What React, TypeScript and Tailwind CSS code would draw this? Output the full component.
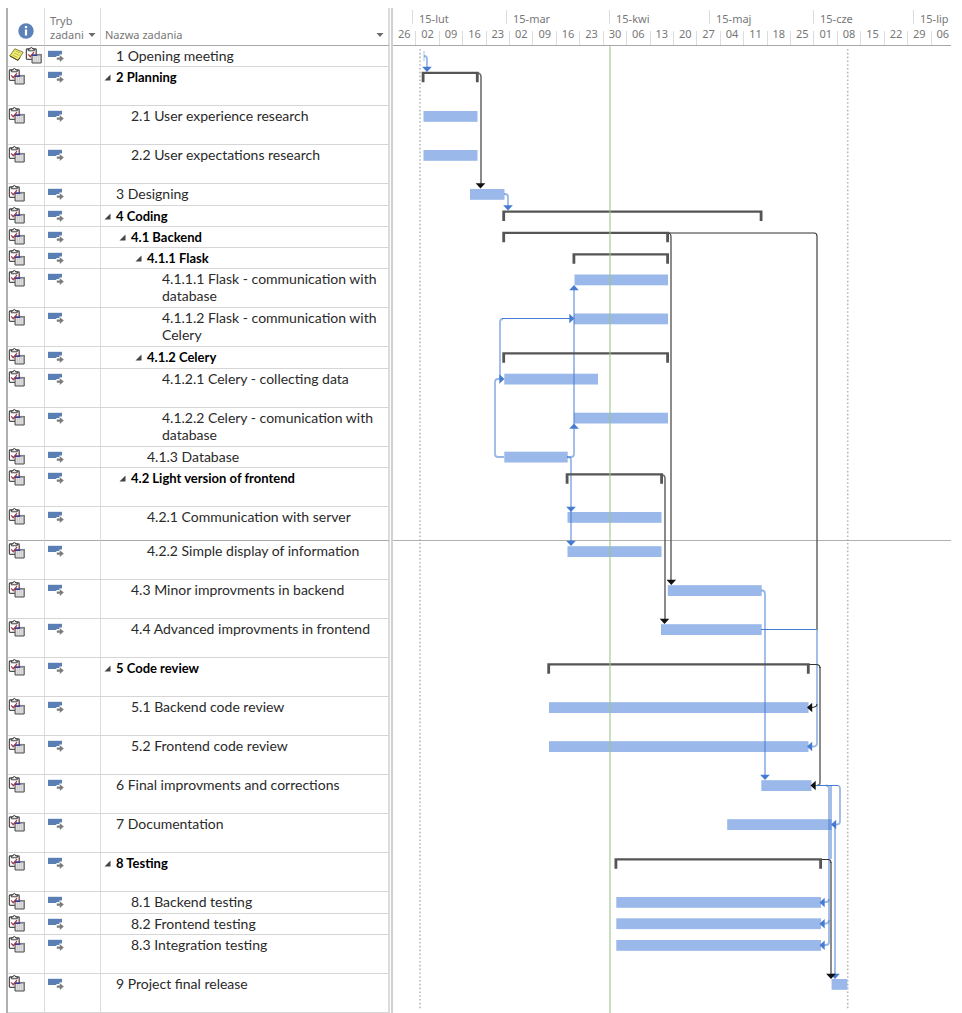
import React from "react";

type Task = {
  id: string;
  name: string;
  level: 1 | 2 | 3 | 4;
  size: "xs" | "sm" | "md" | "lg";
  summary?: boolean;
  note?: boolean;
  pageBreak?: boolean;
};

const tasks: Task[] = [
  { id: "1", name: "Opening meeting", level: 1, size: "xs", note: true },
  { id: "2", name: "Planning", level: 1, size: "lg", summary: true },
  { id: "2.1", name: "User experience research", level: 2, size: "lg" },
  { id: "2.2", name: "User expectations research", level: 2, size: "lg" },
  { id: "3", name: "Designing", level: 1, size: "sm" },
  { id: "4", name: "Coding", level: 1, size: "xs", summary: true },
  { id: "4.1", name: "Backend", level: 2, size: "xs", summary: true },
  { id: "4.1.1", name: "Flask", level: 3, size: "xs", summary: true },
  { id: "4.1.1.1", name: "Flask - communication with database", level: 4, size: "lg" },
  { id: "4.1.1.2", name: "Flask - communication with Celery", level: 4, size: "lg" },
  { id: "4.1.2", name: "Celery", level: 3, size: "sm", summary: true },
  { id: "4.1.2.1", name: "Celery - collecting data", level: 4, size: "lg" },
  { id: "4.1.2.2", name: "Celery - comunication with database", level: 4, size: "lg" },
  { id: "4.1.3", name: "Database", level: 3, size: "xs" },
  { id: "4.2", name: "Light version of frontend", level: 2, size: "lg", summary: true },
  { id: "4.2.1", name: "Communication with server", level: 3, size: "md", pageBreak: true },
  { id: "4.2.2", name: "Simple display of information", level: 3, size: "lg" },
  { id: "4.3", name: "Minor improvments in backend", level: 2, size: "lg" },
  { id: "4.4", name: "Advanced improvments in frontend", level: 2, size: "lg" },
  { id: "5", name: "Code review", level: 1, size: "lg", summary: true },
  { id: "5.1", name: "Backend code review", level: 2, size: "lg" },
  { id: "5.2", name: "Frontend code review", level: 2, size: "lg" },
  { id: "6", name: "Final improvments and corrections", level: 1, size: "lg" },
  { id: "7", name: "Documentation", level: 1, size: "lg" },
  { id: "8", name: "Testing", level: 1, size: "lg", summary: true },
  { id: "8.1", name: "Backend testing", level: 2, size: "sm" },
  { id: "8.2", name: "Frontend testing", level: 2, size: "xs" },
  { id: "8.3", name: "Integration testing", level: 2, size: "lg" },
  { id: "9", name: "Project final release", level: 1, size: "lg" },
];

const rowHeight = { xs: "h-[21px]", sm: "h-[22px]", md: "h-[34px]", lg: "h-[39px]" };
const indent = { 1: "pl-[3px]", 2: "pl-[18px]", 3: "pl-[34px]", 4: "pl-[49px]" };

const months = [
  { label: "15-lut", width: "w-[94px]" },
  { label: "15-mar", width: "w-[103px]" },
  { label: "15-kwi", width: "w-[100px]" },
  { label: "15-maj", width: "w-[104px]" },
  { label: "15-cze", width: "w-[100px]" },
  { label: "15-lip", width: "w-[41px]" },
];

const weeks = [
  "26", "02", "09", "16", "23", "02", "09", "16", "23", "30", "06", "13",
  "20", "27", "04", "11", "18", "25", "01", "08", "15", "22", "29", "06",
];

// [x start, x end, y top] of every task bar
const bars: [number, number, number][] = [
  [423.5, 477.5, 111], [423.5, 477.5, 150], [470, 504.5, 189],
  [574.5, 668, 274.5], [574, 668, 313.5], [504.3, 598, 373.7], [574, 668, 412.7],
  [504.3, 567.7, 451.7], [567.5, 661.5, 512], [567.5, 661.5, 546.2],
  [667.8, 761.7, 585.2], [661, 761.7, 624.2], [549, 808.5, 702.2],
  [549, 808.5, 741.2], [761.3, 811.5, 780.2], [727.2, 831.6, 819.2],
  [616.3, 821, 897], [616.3, 821, 918.3], [616.3, 821, 940], [831.6, 847.3, 979],
];

// [x start, x end, y top] of every summary bracket
const brackets: [number, number, number][] = [
  [421.7, 478.7, 71.7], [502.3, 762.5, 210.5], [502.3, 669, 231.7],
  [572.5, 669, 253.3], [502.3, 669, 352.3], [565.7, 663, 473.3],
  [547.3, 809.7, 663.3], [614.5, 822, 858.3],
];

const blueLinks = [
  "M424 56 Q427 56 427 59 V69",
  "M504 194 H505 Q508 194 508 197 V207",
  "M500 379 V322 Q500 319 503 319",
  "M504 457 H498 Q495 457 495 454 V382 Q495 379 498 379 H500",
  "M567 457 H568 Q571 457 571 460 V543",
  "M567 457 H571 Q574 457 574 454 V289",
  "M761 590.5 H762 Q765 590.5 765 594 V777",
  "M817 630 V743 Q817 746.5 814 746.5 H811",
  "M838 785.5 Q840 786 840 789 V821 Q840 824.5 837 824.5 H834",
  "M831 786 V859",
  "M826 785.5 Q829 785.5 829 788 V942 Q829 945 826 945 H823",
  "M829 899 Q829 902 826 902 H823",
  "M829 920 Q829 923.5 826 923.5 H823",
  "M832 824.5 Q835 824.5 835 828 V976",
];

const thinBlue = ["M502 318.5 H571", "M761 629.5 H816", "M813 785.5 H838"];

const blackLinks = [
  "M477 73 Q481 73 481 77 V185",
  "M671 237 V582",
  "M817 630 V236",
  "M661 474.5 Q665 475 665 478 V621",
  "M820 667 V782 Q820 785.5 817 785.5",
  "M831 862 V975",
];

const thinBlack = [
  "M668 233 H814 Q817 233 817 236",
  "M809 664.5 H816 Q820 664.5 820 668",
  "M817 704 Q817 707.5 811 707.5",
  "M821 859.5 H828 Q831 859.5 831 863",
  "M668 233 Q671 233 671 237",
];

type Dir = "down" | "up" | "left" | "right";
const heads: [number, number, Dir, string][] = [
  [427, 72, "down", "#467bd2"], [480.5, 188.5, "down", "#111"], [508, 210.5, "down", "#467bd2"],
  [574, 285, "up", "#467bd2"], [574.5, 318.5, "right", "#467bd2"], [504.5, 379, "right", "#467bd2"],
  [574, 423.5, "up", "#467bd2"], [571, 512, "down", "#467bd2"], [571, 546, "down", "#467bd2"],
  [671.3, 585, "down", "#111"], [664.5, 624, "down", "#111"], [807, 707.5, "left", "#111"],
  [807, 746.5, "left", "#467bd2"], [765, 780, "down", "#467bd2"], [810.5, 785.5, "left", "#111"],
  [831, 824.5, "left", "#467bd2"], [819.5, 902.5, "left", "#467bd2"], [819.5, 923.7, "left", "#467bd2"],
  [819.5, 945.3, "left", "#467bd2"], [835, 979, "down", "#467bd2"], [831, 979, "down", "#111"],
];

function headPath(x: number, y: number, dir: Dir) {
  if (dir === "down") return `M${x} ${y} l-4.8 -5.2 h9.6 z`;
  if (dir === "up") return `M${x} ${y} l-4.8 5.2 h9.6 z`;
  if (dir === "left") return `M${x} ${y} l5.2 -4.8 v9.6 z`;
  return `M${x} ${y} l-5.2 -4.8 v9.6 z`;
}

function InfoIcon() {
  return (
    <svg width="16" height="16" viewBox="0 0 16 16" role="img" aria-label="Indicators">
      <circle cx="8" cy="8" r="7.7" fill="#5b81b8" />
      <rect x="6.9" y="3" width="2.2" height="2.2" fill="#fff" />
      <path d="M6.9 6.6h2.2v6h-2.2z" fill="#fff" />
    </svg>
  );
}

function NoteIcon() {
  return (
    <svg width="17" height="17" viewBox="0 0 17 17" className="shrink-0">
      <path d="M6.8 2.8 15.2 6.2 10 14.2 1.8 9.8z" fill="#f3ee74" stroke="#77732f" strokeWidth="0.9" />
      <path d="M1.8 10 10 14.5 12 11.6" fill="none" stroke="#4a4720" strokeWidth="1" />
      <path d="M7.4 5l5.4 2.3M6 7l5.4 2.5M4.6 9l5 2.6" stroke="#b8b04a" strokeWidth="0.9" />
    </svg>
  );
}

function ClipboardIcon() {
  return (
    <svg width="17" height="18" viewBox="0 0 17 18" className="shrink-0">
      <rect x="1.4" y="3" width="9.8" height="10.4" rx="0.8" fill="#fff" stroke="#505050" strokeWidth="1.3" />
      <path d="M3.4 4.8V3h1.5Q5.1 1.4 6.3 1.4T7.8 3h1.5v1.8z" fill="#e6e6e6" stroke="#333" strokeWidth="0.9" />
      <path d="M3.2 8.4l2 2.3 3.8-4.6" fill="none" stroke="#b0353b" strokeWidth="1.3" />
      <rect x="7" y="8.4" width="9.4" height="8.4" fill="#c9c9c9" />
      <path d="M8 11h7.6M8 13h7.6M8 15h7.6" stroke="#f2f2f2" strokeWidth="1" strokeDasharray="1.3 0.7" />
      <path d="M7 9.5V17H16.2V8" fill="none" stroke="#4c4c4c" strokeWidth="1" />
      <path d="M11.5 8.7h5" stroke="#808080" strokeWidth="1.6" />
      <path d="M6.8 9.1h5.4" stroke="#26268c" strokeWidth="1.5" />
    </svg>
  );
}

function AutoScheduleIcon() {
  return (
    <svg width="16" height="17" viewBox="0 0 16 17" className="block">
      <rect x="0" y="4.8" width="14" height="6.2" fill="#5a7fb5" />
      <path d="M8.4 11.2V10h3V8.4h2.8l1.8 3v1z" fill="#fff" />
      <path d="M8.8 11.6h3V9.2l4 3.4-4 3.4v-2.2h-3z" fill="#7c7c7c" />
    </svg>
  );
}

function FilterButton({ label }: { label: string }) {
  return (
    <button type="button" aria-label={label} className="flex h-3 w-2 items-center justify-center">
      <svg width="8" height="4" viewBox="0 0 8 4">
        <path d="M0.5 0h7L4 4z" fill="#6b6b6b" />
      </svg>
    </button>
  );
}

function TaskTable() {
  return (
    <table className="w-[384px] shrink-0 table-fixed border-separate border-spacing-0 border-l-2 border-[#b0b0b0] text-left">
      <colgroup>
        <col className="w-[37px]" />
        <col className="w-[56px]" />
        <col />
      </colgroup>
      <thead className="font-['Noto_Sans','Open_Sans',sans-serif] text-[11px] leading-[14px] text-[#777]">
        <tr className="h-[38px]">
          <th className="border-r border-b border-r-[#dcdcdc] border-b-[#a8a8a8] p-0 align-bottom">
            <div className="flex justify-center pb-1.5"><InfoIcon /></div>
          </th>
          <th className="border-r border-b border-r-[#dcdcdc] border-b-[#a8a8a8] p-0 pl-[5px] align-bottom font-normal">
            <div>Tryb</div>
            <div className="flex items-center justify-between pr-1 pb-[3px]">
              <span>zadani</span>
              <FilterButton label="Filter mode" />
            </div>
          </th>
          <th className="border-r-2 border-b border-r-[#dcdcdc] border-b-[#a8a8a8] p-0 pl-1 align-bottom font-normal">
            <div className="flex items-center justify-between pr-1 pb-[3px]">
              <span>Nazwa zadania</span>
              <FilterButton label="Filter name" />
            </div>
          </th>
        </tr>
      </thead>
      <tbody className="font-['Lato','Noto_Sans',sans-serif] leading-[17px] text-[#2a2a2a]">
        {tasks.map((t) => {
          const line = t.pageBreak ? "border-b-[#a8a8a8]" : "border-b-[#d6d6d6]";
          return (
            <tr key={t.id} className={rowHeight[t.size]}>
              <td className={`border-r border-b border-r-[#dcdcdc] p-0 align-top ${line}`}>
                <div className="flex">
                  {t.note && <NoteIcon />}
                  <ClipboardIcon />
                </div>
              </td>
              <td className={`border-r border-b border-r-[#dcdcdc] p-0 pl-[3px] align-top ${line}`}>
                <AutoScheduleIcon />
              </td>
              <td className={`border-r-2 border-b border-r-[#dcdcdc] p-0 align-top ${line}`}>
                <div className={`flex ${indent[t.level]} ${t.summary ? "pt-0.5 text-[13px] font-bold text-black" : "pt-px text-[14px]"}`}>
                  <span className="flex w-3 shrink-0">
                    {t.summary && (
                      <button type="button" aria-label={`Collapse ${t.name}`} className="flex w-2 items-center">
                        <svg width="7" height="7" viewBox="0 0 7 7">
                          <path d="M6.5 0.5V6.5H0.5z" fill="#444" />
                        </svg>
                      </button>
                    )}
                  </span>
                  <span>{`${t.id} ${t.name}`}</span>
                </div>
              </td>
            </tr>
          );
        })}
      </tbody>
    </table>
  );
}

function Timescale() {
  return (
    <div className="h-[38px] border-b border-[#a8a8a8] font-['Noto_Sans','Open_Sans',sans-serif] text-[11px] text-[#777]">
      <div className="flex h-[23px] w-[562px] pt-0.5 pl-[19px]">
        {months.map((m) => (
          <div key={m.label} className={`${m.width} h-3.5 shrink-0 border-l border-[#dcdcdc] pl-1.5 leading-[18px]`}>
            {m.label}
          </div>
        ))}
      </div>
      <div className="grid h-3.5 w-[562px] grid-cols-24 text-center leading-[6px]">
        {weeks.map((w, i) => (
          <div key={i} className="flex flex-col border-r border-[#dcdcdc]">{w}</div>
        ))}
      </div>
    </div>
  );
}

function Chart() {
  return (
    <svg width="562" height="967" viewBox="393 46 562 967" className="block" role="img" aria-label="Gantt chart">
      <g stroke="#b8b8b8" strokeWidth="1.6" strokeDasharray="1.6 2.2">
        <path d="M420 49V1010" />
        <path d="M847.7 49V1010" />
      </g>
      <path d="M393 540.5H955" stroke="#b0b0b0" />
      {bars.map(([a, b, y], i) => (
        <rect key={i} x={a} y={y} width={b - a} height="10.8" fill="#9ab8ea" />
      ))}
      <path d="M424 51v10" stroke="#b5cdf2" strokeWidth="1.2" />
      <g fill="none" stroke="#467bd2" strokeOpacity="0.55" strokeWidth="1.8">
        {blueLinks.map((d) => <path key={d} d={d} />)}
      </g>
      <g fill="none" stroke="#555" strokeOpacity="0.85" strokeWidth="1.6">
        {blackLinks.map((d) => <path key={d} d={d} />)}
      </g>
      <g fill="none" stroke="#333" strokeWidth="1.1">
        {thinBlack.map((d) => <path key={d} d={d} />)}
      </g>
      <g fill="none" stroke="#467bd2" strokeWidth="1">
        {thinBlue.map((d) => <path key={d} d={d} />)}
      </g>
      {brackets.map(([a, b, y], i) => (
        <path
          key={i}
          d={`M${a} ${y}H${b}V${y + 10.5}h-2.8V${y + 2.2}H${a + 2.8}V${y + 10.5}h-2.8z`}
          fill="#555"
        />
      ))}
      {heads.map(([x, y, dir, fill], i) => (
        <path key={i} d={headPath(x, y, dir)} fill={fill} />
      ))}
      <path d="M610 46V1013" stroke="#9cc48c" strokeOpacity="0.6" strokeWidth="1.8" />
    </svg>
  );
}

export default function App() {
  return (
    <main className="flex min-h-screen items-start bg-white pt-2 pr-[11px] pl-1.5">
      <TaskTable />
      <section className="ml-px min-w-0 flex-1 overflow-hidden border-l-2 border-[#d0d0d0]">
        <Timescale />
        <Chart />
      </section>
    </main>
  );
}
